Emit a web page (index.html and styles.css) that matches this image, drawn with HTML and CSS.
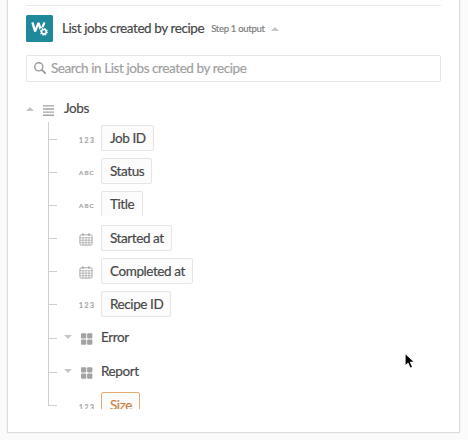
FILE: index.html
```html
<!DOCTYPE html>
<html lang="en">
<head>
<meta charset="utf-8">
<title>Recipe data</title>
<link rel="stylesheet" href="styles.css">
</head>
<body>
<svg class="defs" width="0" height="0">
  <symbol id="calendar" viewBox="0 0 14 13">
    <g fill="none" stroke="#a0a0a0" stroke-width=".9">
      <rect x=".9" y="1.8" width="12.2" height="10.3" rx="1.4"/>
      <path d="M1 4.7h12M1 7.2h12M1 9.7h12M4 4.7v7.4M7 4.7v7.4M10 4.7v7.4" stroke-width=".7"/>
      <path d="M4 .3v2.6M10 .3v2.6" stroke-width="1.2"/>
    </g>
  </symbol>
  <symbol id="object" viewBox="0 0 12 12">
    <g fill="#a3a3a3"><rect x="0" y=".2" width="5.3" height="5.3" rx="1"/><rect x="6.1" y=".2" width="5.3" height="5.3" rx="1"/><rect x="0" y="6.4" width="5.3" height="5.3" rx="1"/><rect x="6.1" y="6.4" width="5.3" height="5.3" rx="1"/></g>
  </symbol>
</svg>
<main class="card">
  <header class="head">
    <svg class="logo" viewBox="0 0 27 27">
      <rect width="27" height="27" rx="1.5" fill="#20889b"/>
      <path d="M6.4 7.4l2.7 9 3.4-8.6 2.4 7M18.4 7.4l-2.6 6.6" fill="none" stroke="#fff" stroke-width="2.3" stroke-linejoin="bevel"/>
      <circle cx="17.9" cy="16.8" r="4.6" fill="#20889b"/>
      <circle cx="17.9" cy="16.8" r="2.3" fill="none" stroke="#fff" stroke-width="1.7"/>
      <circle cx="17.9" cy="16.8" r="3.4" fill="none" stroke="#fff" stroke-width="1.1" stroke-dasharray="1.33 1.34"/>
    </svg>
    <h1 class="title">List jobs created by recipe</h1>
    <span class="step">Step 1 output</span>
    <i class="caret up"></i>
  </header>
  <div class="search">
    <svg class="lens" viewBox="0 0 13 13"><circle cx="5.2" cy="5.2" r="4.4" fill="none" stroke="#999" stroke-width="1.5"/><path d="M8.5 8.5l3.6 3.6" stroke="#999" stroke-width="1.9" stroke-linecap="round"/></svg>
    <span class="hint">Search in List jobs created by recipe</span>
  </div>
  <section class="tree">
    <div class="root">
      <i class="caret up"></i>
      <svg class="list" viewBox="0 0 11 11"><path d="M0 .9h11M0 4h11M0 7.1h11M0 10.2h11" stroke="#a3a3a3" stroke-width="1.4"/></svg>
      <span class="name">Jobs</span>
    </div>
    <ul class="fields">
      <li class="field"><i class="tick"></i><span class="type">123</span><span class="pill">Job ID</span></li>
      <li class="field"><i class="tick"></i><span class="type abc">ABC</span><span class="pill">Status</span></li>
      <li class="field clipped"><i class="tick"></i><span class="type abc">ABC</span><span class="pill">Title</span></li>
      <li class="field raised"><i class="tick"></i><svg class="cal"><use href="#calendar"/></svg><span class="pill">Started at</span></li>
      <li class="field raised"><i class="tick"></i><svg class="cal"><use href="#calendar"/></svg><span class="pill">Completed at</span></li>
      <li class="field raised"><i class="tick"></i><span class="type">123</span><span class="pill">Recipe ID</span></li>
      <li class="field group"><i class="tick"></i><i class="caret down"></i><svg class="obj"><use href="#object"/></svg><span class="name">Error</span></li>
      <li class="field group"><i class="tick"></i><i class="caret down"></i><svg class="obj"><use href="#object"/></svg><span class="name">Report</span></li>
      <li class="field last"><i class="tick"></i><span class="type">123</span><span class="pill active">Size</span></li>
    </ul>
  </section>
</main>
<svg class="cursor" viewBox="0 0 12 18"><path d="M1 1v13.2l3-2.8 2.2 5 2.6-1.1-2.2-4.9h4.3z" fill="#000" stroke="#fff" stroke-width="1.2"/></svg>
</body>
</html>
```
FILE: styles.css
```css
* { box-sizing: border-box; }
body {
  margin: 0;
  height: 440px;
  overflow: hidden;
  background: #fbfbfb;
  color: #484848;
  font: 13.5px/18px Lato, sans-serif;
  letter-spacing: -.42px;
  -webkit-text-stroke: .2px;
}
.defs { position: absolute; }
.card {
  width: 453px;
  height: 433px;
  margin-left: 7px;
  padding: 5px 18px 0;
  background: #fff;
  border: 1px solid #dcdcdc;
  border-top: 0;
  box-shadow: 0 0 1px #ddd;
}
.head {
  display: flex;
  align-items: center;
  height: 50px;
  padding-bottom: 4px;
  border-top: 1px solid #e9e9e9;
}
.logo { width: 27px; height: 27px; margin-right: 9px; }
.title { margin: -2px 7px 0 0; font-size: 13.5px; font-weight: 400; white-space: nowrap; }
.step { margin: 1px 6px 0 0; font-size: 9.5px; letter-spacing: -.28px; color: #808080; white-space: nowrap; }
.caret { width: 0; height: 0; border: 4px solid transparent; flex: none; }
.up { border-top: 0; border-bottom-color: #c6c6c6; }
.down { border-bottom: 0; border-top-color: #c6c6c6; }
.search {
  display: flex;
  align-items: center;
  height: 27px;
  padding: 0 0 1px 7px;
  border: 1px solid #e5e5e5;
  border-radius: 2px;
  color: #9f9f9f;
}
.lens { width: 12px; height: 12px; margin-right: 5px; }
.root { display: flex; align-items: center; height: 18px; margin-top: 18px; }
.root .name { margin-top: -2px; }
.list { width: 11px; height: 11px; margin: 3px 10px 0 9px; }
.fields {
  display: grid;
  grid-template-rows: 33px 33px 34px 33px 33px 33px 34px 34px 20px;
  margin: 4px 0 0 22px;
  padding: 0;
  list-style: none;
}
.field {
  display: flex;
  align-items: flex-start;
  padding-top: 3px;
  border-left: 1px solid #cfcfcf;
}
.tick { width: 8px; height: 1px; margin-top: 14px; background: #cfcfcf; flex: none; }
.raised .tick, .last .tick { margin-top: 13px; }
.type {
  width: 22px;
  margin: 6px 0 0 22px;
  font-family: Lato, sans-serif;
  font-size: 6.8px;
  line-height: 18px;
  font-weight: 700;
  letter-spacing: 1.5px;
  color: #a8a8a8;
}
.abc { font-size: 6.2px; letter-spacing: 1.1px; }
.raised .type { margin-top: 5px; }
.cal { width: 14px; height: 13px; margin: 8px 8px 0 22px; }
.pill {
  height: 26px;
  padding: 0 7px 0 8px;
  border: 1px solid #e5e5e5;
  border-radius: 2px;
  background: #fcfcfc;
  line-height: 25px;
  white-space: nowrap;
}
.clipped .pill { height: 25px; padding-right: 8px; border-bottom: 0; border-radius: 2px 2px 0 0; }
.group .caret { margin: 11px 9px 0 7px; }
.obj { width: 12px; height: 12px; margin: 9px 8px 0 0; }
.group .name { margin-top: 4px; }
.last { position: relative; height: 20px; overflow: hidden; border-left: 0; padding-left: 1px; }
.last::before { content: ""; position: absolute; left: 0; top: 0; width: 1px; height: 17px; background: #cfcfcf; }
.last .pill { border-color: #e8ac70; color: #c9803f; }
.cursor { position: absolute; left: 404px; top: 352px; width: 12px; height: 18px; }
```
